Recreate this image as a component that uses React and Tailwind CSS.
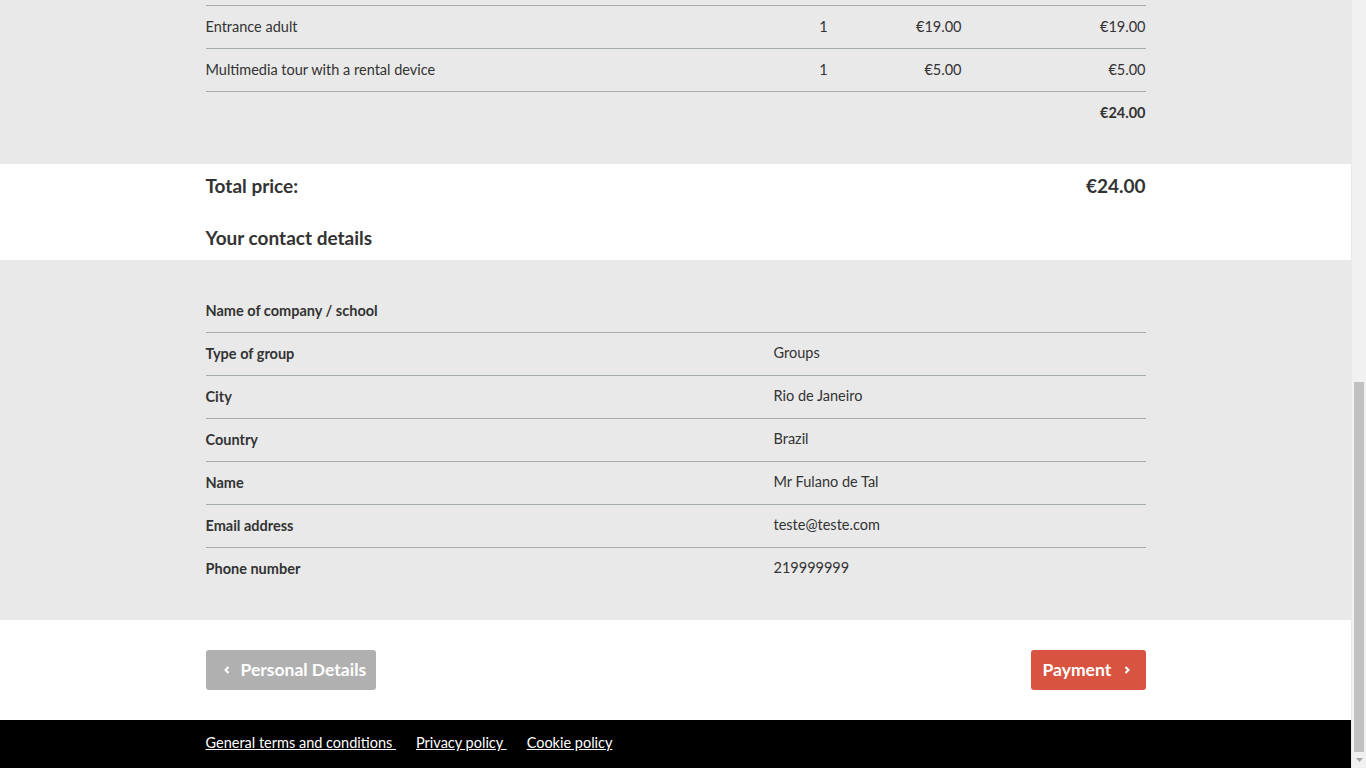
import React from 'react';

const items = [
  { name: 'Entrance adult', qty: 1, price: '€19.00', total: '€19.00' },
  { name: 'Multimedia tour with a rental device', qty: 1, price: '€5.00', total: '€5.00' },
];

const contact = [
  ['Name of company / school', ''],
  ['Type of group', 'Groups'],
  ['City', 'Rio de Janeiro'],
  ['Country', 'Brazil'],
  ['Name', 'Mr Fulano de Tal'],
  ['Email address', 'teste@teste.com'],
  ['Phone number', '219999999'],
];

const Container = ({ children, className = '' }) => (
  <div className={`w-[940px] mx-auto ${className}`}>{children}</div>
);

export default function App() {
  return (
    <div className="flex h-[768px] overflow-hidden bg-white text-[#333] font-['Lato','Liberation_Sans',sans-serif]">
      <div className="flex-1 flex flex-col">
        {/* order lines */}
        <div className="bg-[#e9e9e9] pt-[5px] h-[164px]">
          <Container>
            {items.map((it) => (
              <div key={it.name} className="flex items-center h-[43px] border-t border-[#a3abab] text-[14.5px]">
                <div className="flex-1">{it.name}</div>
                <div className="w-[20px] text-center mr-[28px]">{it.qty}</div>
                <div className="w-[100px] text-right">{it.price}</div>
                <div className="w-[184px] text-right">{it.total}</div>
              </div>
            ))}
            <div className="flex items-center justify-end h-[43px] border-t border-[#a3abab] text-[14.5px] font-bold">
              €24.00
            </div>
          </Container>
        </div>

        {/* total */}
        <div className="h-[96px]">
          <Container>
            <div className="flex justify-between items-center h-[44px] text-[19px] font-bold">
              <span>Total price:</span>
              <span>€24.00</span>
            </div>
            <div className="flex items-center h-[52px] pt-[8px] text-[19px] font-bold">Your contact details</div>
          </Container>
        </div>

        {/* contact details */}
        <div className="bg-[#e9e9e9] h-[360px] pt-[29px]">
          <Container>
            {contact.map(([label, value], i) => (
              <div
                key={label}
                className={`flex items-center h-[43px] text-[14.5px] ${i > 0 ? 'border-t border-[#a3abab]' : ''}`}
              >
                <div className="w-[568px] font-bold">{label}</div>
                <div className="flex-1 -mt-[3px]">{value}</div>
              </div>
            ))}
          </Container>
        </div>

        {/* buttons */}
        <div className="h-[100px] flex items-center">
          <Container className="flex justify-between">
            <button className="h-[40px] w-[170px] rounded-[3px] bg-[#b0b0b0] text-white text-[17.5px] font-bold flex items-center pl-[17px] gap-[10px]">
              <svg width="8" height="10" viewBox="0 0 8 10" fill="none" stroke="white" strokeWidth="2">
                <path d="M5.5 2 L2.5 5 L5.5 8" />
              </svg>
              Personal Details
            </button>
            <button className="h-[40px] w-[115px] rounded-[3px] bg-[#d85441] text-white text-[17.5px] font-bold flex items-center pl-[12px] gap-[12px]">
              Payment
              <svg width="8" height="10" viewBox="0 0 8 10" fill="none" stroke="white" strokeWidth="2">
                <path d="M2.5 2 L5.5 5 L2.5 8" />
              </svg>
            </button>
          </Container>
        </div>

        {/* footer */}
        <div className="bg-black h-[48px] flex items-center pb-[2px]">
          <Container className="flex gap-[20px] text-white text-[14.5px]">
            <a href="#" className="underline">General terms and conditions&nbsp;</a>
            <a href="#" className="underline">Privacy policy&nbsp;</a>
            <a href="#" className="underline">Cookie policy</a>
          </Container>
        </div>
      </div>

      {/* scrollbar */}
      <div className="w-[15px] bg-[#f1f1f1] flex flex-col border-l border-[#e8e8e8]">
        <div className="h-[382px]" />
        <div className="mx-[2px] h-[370px] bg-[#c1c1c1]" />
        <div className="flex-1 flex items-center justify-center">
          <svg width="7" height="4" viewBox="0 0 7 4">
            <path d="M0 0 H7 L3.5 4 Z" fill="#a3a3a3" />
          </svg>
        </div>
      </div>
    </div>
  );
}
